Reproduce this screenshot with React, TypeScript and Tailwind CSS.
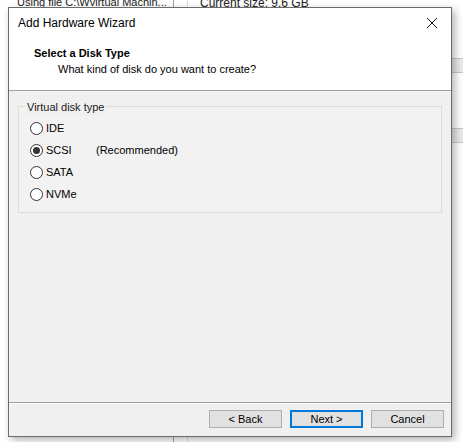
import { useState } from 'react';

const font = { fontFamily: '"Liberation Sans", Arial, sans-serif' };

function Radio({ label, note, checked, onSelect }: { label: string; note?: string; checked: boolean; onSelect: () => void }) {
  return (
    <div className="flex items-center h-[22px] cursor-default" onClick={onSelect}>
      <div className="w-[13px] h-[13px] rounded-full border border-[#333] bg-white flex items-center justify-center">
        {checked && <div className="w-[7px] h-[7px] rounded-full bg-[#333]" />}
      </div>
      <span className="ml-[3px] w-[50px]">{label}</span>
      {note && <span>{note}</span>}
    </div>
  );
}

export default function App() {
  const [disk, setDisk] = useState('SCSI');

  return (
    <div className="relative w-[463px] h-[442px] overflow-hidden bg-white text-[11px] text-black" style={font}>
      {/* background app, behind the dialog */}
      <div className="flex h-[442px]">
        <div className="w-[174px] border-r border-[#a0a0a0] bg-white overflow-hidden">
          <div className="pl-[17px] -mt-[6px] whitespace-nowrap text-[#222]">Using file C:\Wvirtual Machin...</div>
        </div>
        <div className="w-[14px] border-r border-[#dcdcdc] bg-white" />
        <div className="flex-1 bg-white flex flex-col">
          <div className="pl-[12px] -mt-[6px] h-[13px] whitespace-nowrap text-[12px] text-[#222]">Current size: 9.6 GB</div>
          <div className="h-[51px]" />
          <div className="h-[15px] border-y border-[#c8c8c8] bg-[#eaeaea]" />
          <div className="h-[55px]" />
          <div className="h-[15px] border-y border-[#c8c8c8] bg-[#eaeaea]" />
        </div>
      </div>

      {/* dialog */}
      <div className="absolute left-[8px] top-[7px] w-[444px] h-[430px] flex flex-col border border-[#6b6b6b] bg-[#f0f0f0] shadow-[3px_3px_8px_rgba(0,0,0,0.3)]">
        <div className="bg-white h-[83px] border-b border-[#a0a0a0] flex flex-col">
          <div className="flex items-center justify-between h-[29px] pl-[9px] pr-[12px]">
            <span className="text-[12px]">Add Hardware Wizard</span>
            <svg width="12" height="12" viewBox="0 0 12 12" className="mr-[1px]">
              <path d="M1 1L11 11M11 1L1 11" stroke="#111" strokeWidth="1" fill="none" />
            </svg>
          </div>
          <div className="pl-[25px] pt-[8px] font-bold leading-[16px]">Select a Disk Type</div>
          <div className="pl-[49px] leading-[17px]">What kind of disk do you want to create?</div>
        </div>

        <div className="flex-1 px-[9px] pt-[15px]">
          <div className="relative h-[107px] border border-[#dcdcdc] bg-[#f2f2f2] px-[11px] pt-[10px]">
            <span className="absolute -top-[8px] left-[6px] px-[2px] bg-[#f0f0f0] text-[#222]">Virtual disk type</span>
            {['IDE', 'SCSI', 'SATA', 'NVMe'].map((d) => (
              <Radio key={d} label={d} note={d === 'SCSI' ? '(Recommended)' : undefined} checked={disk === d} onSelect={() => setDisk(d)} />
            ))}
          </div>
        </div>

        <div className="h-[34px] border-t border-[#a0a0a0] shadow-[inset_0_1px_0_#ffffff] flex items-start justify-end gap-[8px] pt-[7px] pr-[7px]">
          <button className="w-[73px] h-[18px] border border-[#adadad] bg-[#e1e1e1] flex items-center justify-center leading-none">&lt; Back</button>
          <button className="w-[73px] h-[18px] border-2 border-[#0078d7] bg-[#e1e1e1] flex items-center justify-center leading-none">Next &gt;</button>
          <button className="w-[73px] h-[18px] border border-[#adadad] bg-[#e1e1e1] flex items-center justify-center leading-none">Cancel</button>
        </div>
      </div>
    </div>
  );
}
